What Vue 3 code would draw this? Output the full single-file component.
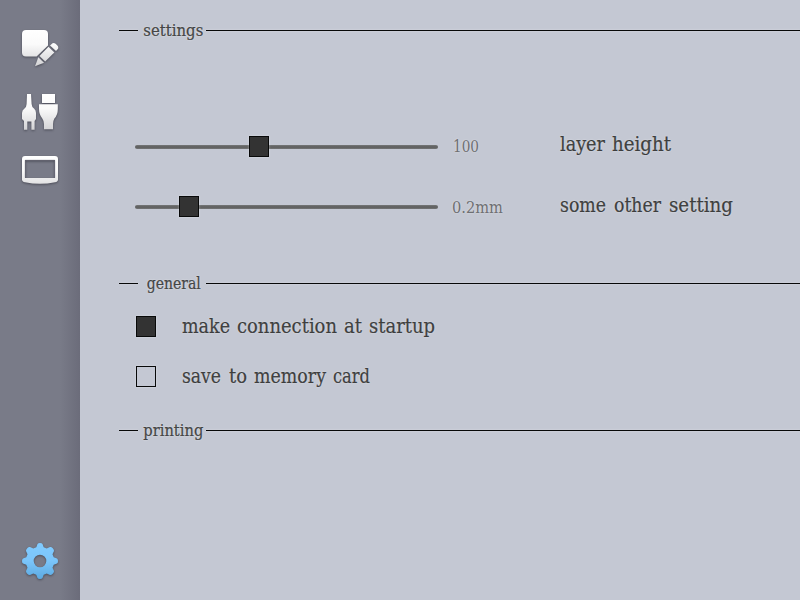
<script setup>
import { h } from 'vue'

// A label drawn word by word so that each word keeps its condensed width.
const Label = (props) =>
  h('svg', { class: ['label', props.kind], width: props.width, height: 28, viewBox: `0 0 ${props.width} 28` }, [
    h('text', { y: 20 }, props.words.map(([word, x, length]) =>
      h('tspan', { x, textLength: length, lengthAdjust: 'spacingAndGlyphs' }, word)))
  ])
Label.props = ['words', 'kind', 'width']

const sliders = [
  { at: 114, value: [['100', 1, 26]], name: [['layer', 0, 45], ['height', 52, 59]] },
  { at: 44, value: [['0.2mm', 0, 51]], name: [['some', 0, 46], ['other', 54, 47], ['setting', 109, 64]] }
]
const checks = [
  { on: true, name: [['make', 0, 48], ['connection', 55, 100], ['at', 162, 18], ['startup', 187, 66]] },
  { on: false, name: [['save', 0, 39], ['to', 47, 18], ['memory', 72, 72], ['card', 151, 37]] }
]
</script>

<template>
  <div class="app">
    <nav class="sidebar">
      <svg class="icon edit" width="44" height="44" viewBox="0 0 44 44">
        <defs>
          <linearGradient id="white" gradientUnits="userSpaceOnUse" x1="0" y1="2" x2="0" y2="38">
            <stop offset="0" stop-color="#fff" />
            <stop offset=".4" stop-color="#fafafa" />
            <stop offset="1" stop-color="#d3d3d5" />
          </linearGradient>
        </defs>
        <path fill="url(#white)" d="M8 2H26Q30 2 30 6V17.5L18.6 28.5H8Q4 28.5 4 24.5V6Q4 2 8 2Z" />
        <g fill="url(#white)">
          <path d="M33.4 16.2Q35.4 14.2 37.6 15.8L39.4 17.6Q41.2 19.8 39.4 21.6L38 22.9L32 17.5Z" />
          <path d="M30.5 18.8L36.3 24.5L27.2 33.6L21.5 28Z" />
          <path d="M20.3 29.2L26 34.8L17 38.2Z" />
        </g>
      </svg>
      <svg class="icon plugs" width="44" height="44" viewBox="0 0 44 44">
        <g fill="url(#white)">
          <path d="M9 2H13L13.6 12Q13.8 15 16 16.5Q18 18 18 21V27L16.6 29V37.8H13.4V29.5H9.3V37.8H6V29L4 27V21Q4 18 6.5 16.5Q8.5 15 8.6 12Z" />
          <path d="M24 2H37V11H24Z" />
          <path d="M21 12.3H39.8V17Q39.8 23 36.4 26.5Q35 29 35 32V37.2H26V32Q26 29 24.3 26.5Q21 22.5 21 17Z" />
        </g>
      </svg>
      <svg class="icon screen" width="44" height="36" viewBox="0 0 44 36">
        <path fill="url(#white)" fill-rule="evenodd" d="M7 2H37Q40 2 40 5V25.5Q40 27.8 37 28.2Q22 31.2 7 28.2Q4 27.8 4 25.5V5Q4 2 7 2ZM7 6V24H37V6Z" />
        <path fill="none" stroke="#6b6c78" stroke-width=".7" d="M7.3 23.7V6.3H36.7V23.7" />
      </svg>
      <svg class="icon gear" width="44" height="44" viewBox="0 0 44 44">
        <defs>
          <linearGradient id="blue" x1="0" y1="0" x2="0" y2="1">
            <stop offset="0" stop-color="#81cbff" />
            <stop offset=".5" stop-color="#7bc5fa" />
            <stop offset="1" stop-color="#5caae1" />
          </linearGradient>
        </defs>
        <path fill="url(#blue)" fill-rule="evenodd" d="M19.5 5Q20 4 22 4Q24 4 24.5 5L25.7 8.3L28.7 9.5L32 8Q33.4 7.7 34.8 9.2Q36.2 10.7 36 12L34.5 15.3L35.7 18.3L39 19.5Q40 20 40 22Q40 24 39 24.5L35.7 25.7L34.5 28.7L36 32Q36.2 33.3 34.8 34.8Q33.3 36.2 32 36L28.7 34.5L25.7 35.7L24.5 39Q24 40 22 40Q20 40 19.5 39L18.3 35.7L15.3 34.5L12 36Q10.7 36.2 9.2 34.8Q7.8 33.3 8 32L9.5 28.7L8.3 25.7L5 24.5Q4 24 4 22Q4 20 5 19.5L8.3 18.3L9.5 15.3L8 12Q7.8 10.7 9.2 9.2Q10.6 7.7 12 8L15.3 9.5L18.3 8.3ZM22 15.7A6.3 6.3 0 1 0 22 28.3A6.3 6.3 0 1 0 22 15.7Z" />
      </svg>
    </nav>

    <main class="content">
      <section class="settings">
        <h2 class="heading"><Label :words="[['settings', 5.3, 60]]" kind="small" :width="68" /></h2>
        <div class="sliders">
          <div v-for="(s, i) in sliders" :key="i" class="slider-row">
            <div class="track"><span class="thumb" :style="{ marginLeft: s.at + 'px' }"></span></div>
            <Label class="value-label" :words="s.value" kind="value" :width="108" />
            <Label class="slider-name" :words="s.name" kind="large" :width="200" />
          </div>
        </div>
      </section>

      <section class="general">
        <h2 class="heading"><Label :words="[['general', 8.7, 54]]" kind="small" :width="68" /></h2>
        <div class="checks">
          <div v-for="(c, i) in checks" :key="i" class="check-row">
            <span class="box" :class="{ on: c.on }"></span>
            <Label class="check-name" :words="c.name" kind="large" :width="280" />
          </div>
        </div>
      </section>

      <section>
        <h2 class="heading"><Label :words="[['printing', 5.3, 60]]" kind="small" :width="68" /></h2>
      </section>
    </main>
  </div>
</template>

<style>
body { margin: 0; overflow: hidden; }
svg.label { display: block; flex: none; overflow: visible; }
.label text {
  font-family: "DejaVu Serif Condensed", "DejaVu Serif", serif;
  font-size: 20.5px;
  font-weight: 400;
  fill: #353636;
  stroke: #353636;
  stroke-width: .2px;
  text-shadow: 0 0 2px rgba(255, 255, 255, .55);
}
.label.small text { font-size: 17.5px; fill: #3a3b3b; }
.label.value text { font-size: 16px; fill: #6e6f72; stroke: none; }
</style>

<style scoped>
.app { display: flex; width: 800px; height: 600px; background: #c4c8d3; overflow: hidden; }
.sidebar {
  box-sizing: border-box;
  display: flex;
  flex-direction: column;
  width: 80px;
  height: 600px;
  padding: 28px 18px 17px;
  background: linear-gradient(90deg, #797b88 0, #797b88 60px, #6b6c7a 80px);
}
.icon { display: block; flex: none; filter: drop-shadow(0 1px 1px rgba(40, 40, 50, .55)); }
.plugs { margin-top: 20px; }
.screen { margin-top: 18px; }
.gear { margin-top: auto; }
.content { flex: 1; padding: 16px 0 0 39px; }
.settings { height: 253px; }
.general { height: 147px; }
.heading { display: flex; align-items: center; height: 28px; margin: 0; }
.heading::before, .heading::after { content: ""; height: 1px; margin-top: 1px; background: #070808; box-shadow: 0 0 2px rgba(255, 255, 255, .5); }
.heading::before { width: 19px; }
.heading::after { flex: 1; }
.sliders { padding: 87px 0 0 16px; }
.slider-row { display: flex; align-items: center; height: 32px; margin-bottom: 28px; }
.track {
  display: flex;
  align-items: center;
  width: 303px;
  height: 4px;
  margin-right: 14px;
  border-radius: 2px;
  background: linear-gradient(#777979, #626363 40%, #626363 70%, #777979);
}
.thumb, .box { box-sizing: border-box; flex: none; width: 20px; height: 21px; border: 1px solid #080909; box-shadow: 0 0 2px rgba(255, 255, 255, .45); }
.thumb, .box.on { background: #333; }
.thumb { margin-top: -1px; }
.value-label { margin-top: -2px; }
.slider-name { margin-top: -4px; }
.slider-row + .slider-row .value-label { margin-top: 0; }
.slider-row + .slider-row .slider-name { margin-top: -2px; }
.checks { padding: 18px 0 0 17px; }
.check-row { display: flex; align-items: center; gap: 26px; height: 22px; margin-bottom: 28px; }
.check-name { margin-top: 2px; }
</style>
